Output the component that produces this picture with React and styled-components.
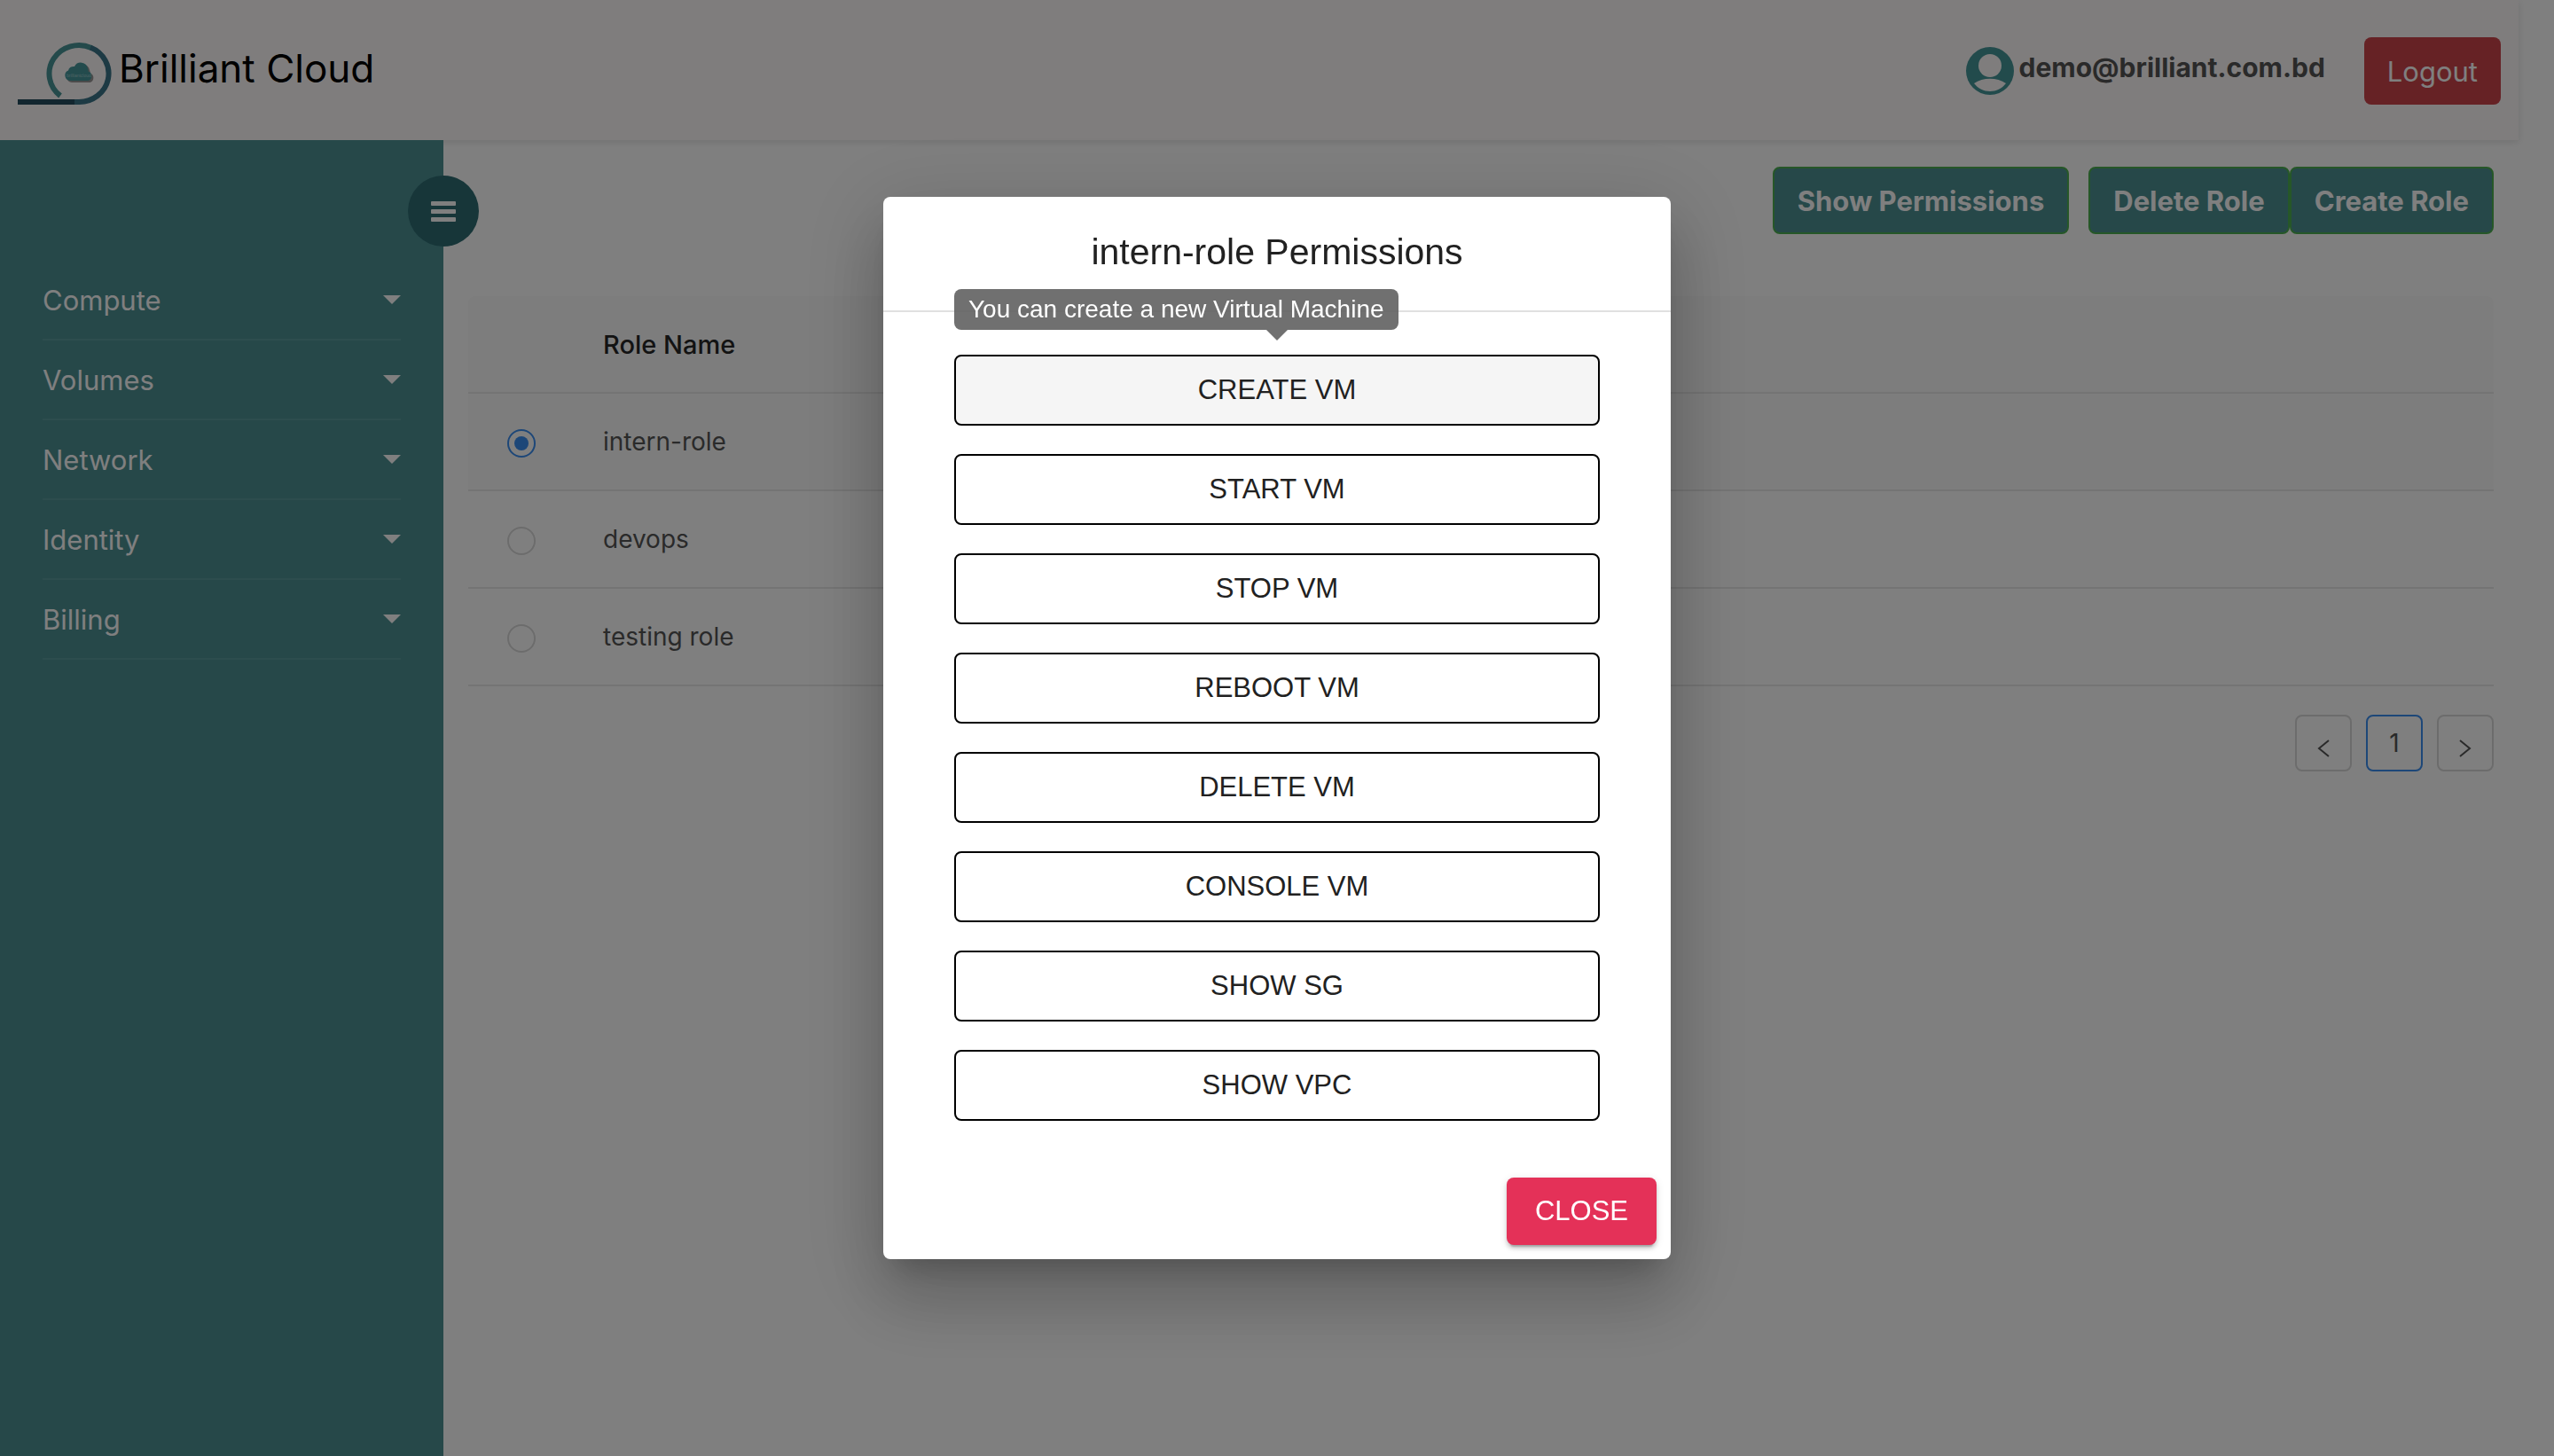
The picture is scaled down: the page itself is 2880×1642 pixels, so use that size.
import React, { useState } from "react";
import styled, { createGlobalStyle, css } from "styled-components";

const ui = `Inter, "Noto Sans", sans-serif`;
const dialogFont = `"Liberation Sans", Helvetica, Arial, sans-serif`;

const Global = createGlobalStyle`
  *, *::before, *::after { box-sizing: border-box; }
  body { margin: 0; background: #fff; font-family: ${ui}; }
  button { font-family: inherit; cursor: pointer; }
  h1, h2, ul { margin: 0; padding: 0; }
`;

const Page = styled.div`
  min-height: 100vh;
  display: flex;
  flex-direction: column;
`;

const Header = styled.header`
  height: 158px;
  margin-right: 40px;
  padding: 42px 20px;
  display: flex;
  align-items: flex-start;
  justify-content: space-between;
  background: #fffafa;
  box-shadow: 0 2px 8px rgba(0, 0, 0, 0.12);
`;

const Brand = styled.a`
  display: flex;
  align-items: flex-start;
  gap: 8px;
  color: #000;
  text-decoration: none;
  font-size: 44px;
  line-height: 70px;
`;

const BrandMark = styled.svg`
  margin-top: 6px;
`;

const Account = styled.div`
  display: flex;
  align-items: center;
`;

const Email = styled.span`
  margin: 0 44px 8px 6px;
  color: #555;
  font-size: 30px;
  font-weight: 700;
  line-height: 36px;
`;

const LogoutButton = styled.button`
  height: 76px;
  padding: 0 26px;
  border: 0;
  border-radius: 8px;
  background: #cc444b;
  color: #fff;
  font-size: 31px;
`;

const Body = styled.div`
  flex: 1;
  display: flex;
`;

const Sidebar = styled.aside`
  position: relative;
  z-index: 1;
  width: 500px;
  flex: none;
  padding: 136px 48px 0;
  background: #4c9093;
`;

const MenuToggle = styled.button`
  position: absolute;
  top: 40px;
  right: -40px;
  width: 80px;
  height: 80px;
  padding: 0;
  border: 0;
  border-radius: 50%;
  background: #2e6c72;
  display: grid;
  place-items: center;
`;

const Menu = styled.ul`
  list-style: none;
`;

const MenuItem = styled.li`
  border-bottom: 2px solid #5a9b9d;
`;

const MenuButton = styled.button`
  width: 100%;
  height: 88px;
  padding: 0;
  border: 0;
  background: none;
  display: flex;
  align-items: center;
  justify-content: space-between;
  color: #fff;
  font-size: 31px;
`;

const Caret = styled.span`
  border: 10px solid transparent;
  border-top-color: #fff;
  border-bottom-width: 0;
`;

const Main = styled.main`
  flex: 1;
  padding: 30px 68px 0 28px;
`;

const Toolbar = styled.div`
  display: flex;
  justify-content: flex-end;
`;

const ToolButton = styled.button`
  height: 76px;
  padding: 0 26px;
  border: 2px solid #4caf50;
  border-radius: 8px;
  background: #4c9093;
  color: #fff;
  font-size: 31px;
  font-weight: 700;
  ${(p) => p.$spaced && css`margin-right: 22px;`}
`;

const RoleTable = styled.table`
  width: 100%;
  margin-top: 70px;
  border-collapse: separate;
  border-spacing: 0;
  text-align: left;
  font-size: 28px;
  line-height: 44px;
  color: #555;
`;

const HeadCell = styled.th`
  height: 110px;
  padding: 2px 24px 0;
  background: #fafafa;
  border-bottom: 2px solid #e8e8e8;
  color: #262626;
  font-size: 29px;
  font-weight: 500;
  &:first-child { width: 128px; border-top-left-radius: 8px; }
  &:last-child { border-top-right-radius: 8px; }
`;

const Row = styled.tr`
  background: ${(p) => (p.$selected ? "#fafafa" : "#fff")};
`;

const Cell = styled.td`
  height: 110px;
  padding: 0 24px;
  border-bottom: 2px solid #e8e8e8;
`;

const RadioCell = styled(Cell)`
  padding: 4px 0 0 44px;
`;

const Radio = styled.input`
  appearance: none;
  display: grid;
  place-items: center;
  width: 32px;
  height: 32px;
  margin: 0;
  border: 2px solid #d9d9d9;
  border-radius: 50%;
  background: #fff;
  &:checked {
    border-color: #3b8ef0;
  }
  &:checked::before {
    content: "";
    width: 16px;
    height: 16px;
    border-radius: 50%;
    background: #3b8ef0;
  }
`;

const Pagination = styled.nav`
  display: flex;
  justify-content: flex-end;
  gap: 16px;
  margin-top: 32px;
`;

const PageButton = styled.button`
  width: 64px;
  height: 64px;
  padding: 0;
  border: 2px solid ${(p) => (p.$current ? "#3b8ef0" : "#d9d9d9")};
  border-radius: 8px;
  background: #fff;
  color: #555;
  font-size: 28px;
  display: grid;
  place-items: center;
`;

const Chevron = styled.svg`
  margin-top: 12px;
`;

const Overlay = styled.div`
  position: fixed;
  inset: 0;
  z-index: 10;
  display: grid;
  place-items: center;
  background: rgba(0, 0, 0, 0.5);
`;

const Dialog = styled.section`
  width: 888px;
  border-radius: 8px;
  background: #fff;
  color: #212121;
  font-family: ${dialogFont};
  box-shadow: 0 22px 30px -14px rgba(0, 0, 0, 0.2),
    0 48px 76px 6px rgba(0, 0, 0, 0.14),
    0 18px 92px 16px rgba(0, 0, 0, 0.12);
`;

const DialogTitle = styled.h2`
  padding: 30px 48px 34px;
  font-size: 41px;
  font-weight: 400;
  line-height: 64px;
  text-align: center;
`;

const Permissions = styled.div`
  display: flex;
  flex-direction: column;
  gap: 32px;
  padding: 48px 80px;
  border-top: 2px solid #e0e0e0;
`;

const PermissionSlot = styled.div`
  position: relative;
  display: flex;
`;

const PermissionButton = styled.button`
  flex: 1;
  height: 80px;
  border: 2px solid #000;
  border-radius: 8px;
  background: ${(p) => (p.$active ? "#f5f5f5" : "#fff")};
  color: #212121;
  font-size: 31px;
`;

const Tooltip = styled.div`
  position: absolute;
  left: 0;
  bottom: 108px;
  padding: 0 16px;
  border-radius: 8px;
  background: rgba(97, 97, 97, 0.9);
  color: #fff;
  font-size: 28px;
  line-height: 46px;
  white-space: nowrap;
`;

const TooltipArrow = styled.span`
  position: absolute;
  left: 50%;
  bottom: 96px;
  margin-left: -12px;
  border: 12px solid transparent;
  border-top-color: rgba(97, 97, 97, 0.9);
  border-bottom-width: 0;
`;

const DialogActions = styled.footer`
  display: flex;
  justify-content: flex-end;
  padding: 16px;
`;

const CloseButton = styled.button`
  height: 76px;
  padding: 0 32px;
  border: 0;
  border-radius: 8px;
  background: #e43158;
  color: #fff;
  font-size: 31px;
  box-shadow: 0 6px 2px -4px rgba(0, 0, 0, 0.2),
    0 4px 4px rgba(0, 0, 0, 0.14), 0 2px 10px rgba(0, 0, 0, 0.12);
`;

const MENU = ["Compute", "Volumes", "Network", "Identity", "Billing"];
const ROLES = ["intern-role", "devops", "testing role"];
const PERMISSIONS = [
  "CREATE VM",
  "START VM",
  "STOP VM",
  "REBOOT VM",
  "DELETE VM",
  "CONSOLE VM",
  "SHOW SG",
  "SHOW VPC",
];

const CLOUD =
  "M59 43a6 6 0 0 1-2-11.500a6 6 0 0 1 7-4.500a8 8 0 0 1 15 2q1 2 .5 3.500a5.500 5.500 0 0 1 0 10.500z";

function Logo() {
  return (
    <BrandMark width="106" height="70" viewBox="0 0 106 70" fill="none" aria-hidden="true">
      <path d="M48 60A33.500 32 0 0 1 83 6" stroke="#489496" strokeWidth="6" />
      <path d="M82 5.500A33.500 32 0 0 1 68.500 67H63" stroke="#3a7488" strokeWidth="6" />
      <path d="M0 67H64" stroke="#244c5e" strokeWidth="6" />
      <path d={CLOUD} transform="translate(2 2)" fill="#555" opacity=".6" />
      <path d={CLOUD} fill="#46969a" />
      <text x="55" y="39" fontSize="5" fontFamily="Liberation Sans, sans-serif" fill="#9cc8ca">
        brilliantcloud
      </text>
    </BrandMark>
  );
}

function UserIcon() {
  return (
    <svg width="54" height="54" viewBox="0 0 54 54" aria-hidden="true">
      <circle cx="27" cy="27" r="27" fill="#449698" />
      <circle cx="27" cy="21" r="13" fill="#fffafa" />
      <path d="M9 41C19 34 35 34 45 41 36 53 18 53 9 41z" fill="#fffafa" />
    </svg>
  );
}

function MenuIcon() {
  return (
    <svg width="28" height="23" viewBox="0 0 28 23" fill="#fff" aria-hidden="true">
      <rect y="0" width="28" height="5" rx="1" />
      <rect y="9" width="28" height="5" rx="1" />
      <rect y="18" width="28" height="5" rx="1" />
    </svg>
  );
}

function Arrow({ direction }) {
  return (
    <Chevron width="14" height="20" viewBox="0 0 14 20" fill="none" stroke="#555" strokeWidth="2" aria-hidden="true">
      <path d={direction === "left" ? "M13 1 2 10l11 9" : "M1 1l11 9-11 9"} />
    </Chevron>
  );
}

export default function App() {
  const [selected, setSelected] = useState("intern-role");

  return (
    <>
      <Global />
      <Page>
        <Header>
          <Brand href="#home">
            <Logo />
            Brilliant Cloud
          </Brand>
          <Account>
            <UserIcon />
            <Email>demo@brilliant.com.bd</Email>
            <LogoutButton type="button">Logout</LogoutButton>
          </Account>
        </Header>
        <Body>
          <Sidebar>
            <MenuToggle type="button" aria-label="Toggle menu">
              <MenuIcon />
            </MenuToggle>
            <Menu>
              {MENU.map((name) => (
                <MenuItem key={name}>
                  <MenuButton type="button">
                    {name}
                    <Caret />
                  </MenuButton>
                </MenuItem>
              ))}
            </Menu>
          </Sidebar>
          <Main>
            <Toolbar>
              <ToolButton type="button" $spaced>Show Permissions</ToolButton>
              <ToolButton type="button">Delete Role</ToolButton>
              <ToolButton type="button">Create Role</ToolButton>
            </Toolbar>
            <RoleTable>
              <thead>
                <tr>
                  <HeadCell />
                  <HeadCell scope="col">Role Name</HeadCell>
                </tr>
              </thead>
              <tbody>
                {ROLES.map((role, i) => (
                  <Row key={role} $selected={role === selected}>
                    <RadioCell>
                      <Radio
                        type="radio"
                        name="role"
                        id={`role-${i}`}
                        checked={role === selected}
                        onChange={() => setSelected(role)}
                      />
                    </RadioCell>
                    <Cell>
                      <label htmlFor={`role-${i}`}>{role}</label>
                    </Cell>
                  </Row>
                ))}
              </tbody>
            </RoleTable>
            <Pagination aria-label="Pages">
              <PageButton type="button" aria-label="Previous page">
                <Arrow direction="left" />
              </PageButton>
              <PageButton type="button" $current>1</PageButton>
              <PageButton type="button" aria-label="Next page">
                <Arrow direction="right" />
              </PageButton>
            </Pagination>
          </Main>
        </Body>
      </Page>
      <Overlay>
        <Dialog role="dialog" aria-modal="true" aria-labelledby="dialog-title">
          <DialogTitle id="dialog-title">intern-role Permissions</DialogTitle>
          <Permissions>
            {PERMISSIONS.map((name, i) => (
              <PermissionSlot key={name}>
                {i === 0 && (
                  <>
                    <Tooltip role="tooltip">You can create a new Virtual Machine</Tooltip>
                    <TooltipArrow />
                  </>
                )}
                <PermissionButton type="button" $active={i === 0}>
                  {name}
                </PermissionButton>
              </PermissionSlot>
            ))}
          </Permissions>
          <DialogActions>
            <CloseButton type="button">CLOSE</CloseButton>
          </DialogActions>
        </Dialog>
      </Overlay>
    </>
  );
}
